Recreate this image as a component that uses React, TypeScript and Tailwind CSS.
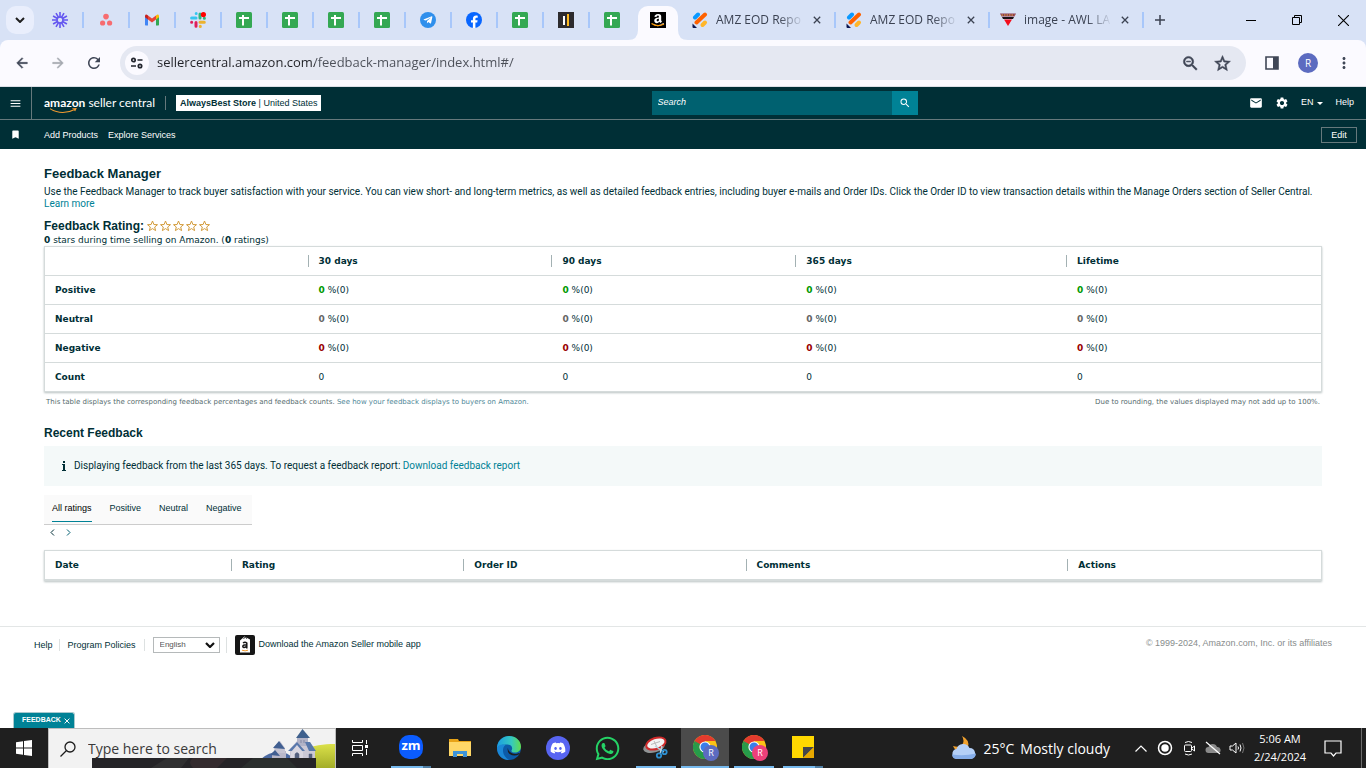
import type { ReactNode } from 'react';
import { clsx } from 'clsx';
import { FaAmazon, FaDiscord, FaTelegramPlane, FaWhatsapp } from 'react-icons/fa';
import {
  MdArrowBack,
  MdArrowForward,
  MdBookmark,
  MdEmail,
  MdMenu,
  MdMoreVert,
  MdRefresh,
  MdSearch,
  MdSettings,
  MdStarBorder,
  MdZoomOut,
} from 'react-icons/md';

// TYPES
type ChildrenProps = { children: ReactNode };

type TableColumn = { title: string; width: string };

// FAVICONS
const Loom = () => (
  <svg viewBox="0 0 16 16" className="size-4" stroke="#6457f0" strokeWidth="1.6">
    {[0, 30, 60, 90, 120, 150].map((angle) => (
      <path key={angle} d="M8 0v5.6M8 10.4V16" transform={`rotate(${angle} 8 8)`} />
    ))}
    <circle cx="8" cy="8" r="3" fill="none" strokeWidth="1.4" />
  </svg>
);

const Asana = () => (
  <svg viewBox="0 0 16 16" className="size-4" fill="#f76c70">
    <circle cx="8" cy="4.600" r="2.8" />
    <circle cx="4.6" cy="11" r="2.6" />
    <circle cx="11.6" cy="11" r="2.6" />
  </svg>
);

const Gmail = () => (
  <svg viewBox="0 0 16 16" className="size-4">
    <path d="M1 4v8.4c0 .6.4 1 1 1h2V6.500z" fill="#4285f4" />
    <path d="M15 4v8.400c0 .6-.4 1-1 1h-2V6.500z" fill="#34a853" />
    <path d="M12 3.500V7.500l3-2.300V4c0-1.500-1.500-2-2.400-1z" fill="#fbbc04" />
    <path d="M1 5.200l3 2.300v-4L3.400 3C2.500 2 1 2.500 1 4z" fill="#c5221f" />
    <path d="M4 3.500v4l4 3 4-3v-4l-4 3z" fill="#ea4335" />
  </svg>
);

const Slack = () => (
  <svg viewBox="0 0 16 16" className="size-4" strokeWidth="3" strokeLinecap="round">
    <path d="M6.200 1.500v.1M1.600 6H6" stroke="#36c5f0" />
    <path d="M10 2v4M14.300 6.200h.1" stroke="#2eb67d" />
    <path d="M10 10.300h4.300M10.300 14.300v.1" stroke="#ecb22e" />
    <path d="M6 10.500v3.800M1.600 10.300h.1" stroke="#e01e5a" />
    <circle cx="13.400" cy="2.600" r="2.600" fill="#ff0000" />
  </svg>
);

const Sheets = () => (
  <svg viewBox="0 0 16 16" className="size-4">
    <rect width="16" height="16" rx="1.500" fill="#34a853" />
    <path d="M3 6h10M7 3v10.500" stroke="#fff" strokeWidth="2" />
  </svg>
);

const Telegram = () => (
  <span className="flex size-4 items-center justify-center rounded-full bg-[#2f8fec] text-white">
    <FaTelegramPlane className="size-2.5" />
  </span>
);

const Facebook = () => (
  <svg viewBox="0 0 16 16" className="size-4">
    <circle cx="8" cy="8" r="8" fill="#0866ff" />
    <path d="M6.900 16v-5.400H5V8.200h1.900V7c0-2.300 1-3.500 3.300-3.500.5 0 1.200.1 1.500.2v2.100h-.9c-1 0-1.400.4-1.400 1.400v1h2.200l-.4 2.400H9.400V16z" fill="#fff" />
  </svg>
);

const BarsFavicon = () => (
  <svg viewBox="0 0 16 16" className="size-4">
    <rect width="16" height="16" fill="#2d2b2e" />
    <path d="M5 4h2v9H5z" fill="#fff" />
    <path d="M9 2h2v12H9z" fill="#fdb81e" />
  </svg>
);

const AmazonFavicon = () => (
  <span className="relative flex size-4 items-center justify-center bg-black text-white">
    <FaAmazon className="size-3.5" />
    <svg viewBox="0 0 16 16" className="absolute inset-0 size-4" fill="none" stroke="#ff9900" strokeWidth="1.300">
      <path d="M1.500 11.500q6 4 12.500.5" />
    </svg>
  </span>
);

const Jotform = () => (
  <svg viewBox="0 0 16 16" className="size-4" strokeWidth="4" strokeLinecap="round">
    <path d="M3 5.500L6 2.500" stroke="#0a99ff" />
    <path d="M4.500 10.500L13 2.500" stroke="#ff6100" />
    <path d="M10.500 13L13 10.500" stroke="#ffb629" />
    <path d="M.5 11.500L5 16H1.500Q.5 16 .5 15z" fill="#0a1551" />
  </svg>
);

const RedTriangle = () => (
  <svg viewBox="0 0 16 16" className="size-4">
    <path d="M0 1.500h16l-1.500 3h-13z" fill="#8c3a52" />
    <path d="M1.500 3h13" stroke="#e5b73b" strokeDasharray="1.500 1" />
    <path d="M2 5h12l-1 2H3z" fill="#1b1015" />
    <path d="M4 7.500h8L8 14z" fill="#f30d1c" />
  </svg>
);

// BROWSER
const PINNED_TABS = [
  { label: 'Loom', Icon: Loom },
  { label: 'Asana', Icon: Asana },
  { label: 'Gmail', Icon: Gmail },
  { label: 'Slack', Icon: Slack },
  { label: 'Sheet 1', Icon: Sheets },
  { label: 'Sheet 2', Icon: Sheets },
  { label: 'Sheet 3', Icon: Sheets },
  { label: 'Sheet 4', Icon: Sheets },
  { label: 'Telegram', Icon: Telegram },
  { label: 'Facebook', Icon: Facebook },
  { label: 'Sheet 5', Icon: Sheets },
  { label: 'Tracker', Icon: BarsFavicon },
  { label: 'Sheet 6', Icon: Sheets },
];

const OPEN_TABS = [
  { title: 'AMZ EOD Repo', Icon: Jotform },
  { title: 'AMZ EOD Repo', Icon: Jotform },
  { title: 'image - AWL LA', Icon: RedTriangle },
];

const CloseGlyph = ({ className }: { className?: string }) => (
  <svg viewBox="0 0 10 10" className={className} fill="none" stroke="currentColor" strokeWidth="1.600">
    <path d="M1 1l8 8M9 1L1 9" />
  </svg>
);

const TabStrip = () => (
  <div className="flex h-10 items-center bg-[#d8e2f6] pl-1.5 text-[#3b4252]">
    <button aria-label="Search tabs" className="mr-1 flex size-7 items-center justify-center rounded-[10px] bg-[#e9eefc]">
      <svg viewBox="0 0 10 6" className="h-1.5 w-2.5" fill="none" stroke="#1f1f1f" strokeWidth="2">
        <path d="M1 1l4 4 4-4" />
      </svg>
    </button>
    {PINNED_TABS.map(({ label, Icon }, index) => (
      <button
        key={label}
        aria-label={label}
        className={clsx(
          'flex h-4 w-[46px] shrink-0 items-center justify-center border-r-2',
          index === PINNED_TABS.length - 1 ? 'border-transparent' : 'border-[#a8c7fa]',
        )}
      >
        <Icon />
      </button>
    ))}
    <div className="relative mr-1 ml-[2px] flex h-[34px] w-10 shrink-0 self-end rounded-t-[10px] bg-[#fbfaff]">
      <svg viewBox="0 0 10 10" className="absolute bottom-0 -left-2.5 size-2.5" fill="#fbfaff">
        <path d="M10 0v10H0Q10 10 10 0z" />
      </svg>
      <svg viewBox="0 0 10 10" className="absolute -right-2.5 bottom-0 size-2.5" fill="#fbfaff">
        <path d="M0 0v10h10Q0 10 0 0z" />
      </svg>
      <button aria-label="Feedback Manager" className="flex w-full items-center justify-center pb-1.5">
        <AmazonFavicon />
      </button>
    </div>
    {OPEN_TABS.map(({ title, Icon }, index) => (
      <div key={index} className="flex h-4 w-[154px] items-center border-r-2 border-[#a8c7fa] pl-2.5">
        <Icon />
        <button className="ml-2 w-[90px] text-left text-xs leading-4 whitespace-nowrap [mask-image:linear-gradient(to_right,black_70%,transparent_98%)]">
          {title}
        </button>
        <button aria-label="Close tab" className="ml-[3px] flex size-4 items-center justify-center">
          <CloseGlyph className="size-2" />
        </button>
      </div>
    ))}
    <button aria-label="New tab" className="flex w-8 justify-center">
      <svg viewBox="0 0 10 10" className="size-2.5" stroke="currentColor" strokeWidth="1.500">
        <path d="M5 0v10M0 5h10" />
      </svg>
    </button>
    <div className="ml-auto flex text-black">
      <button aria-label="Minimize" className="flex h-7 w-[46px] items-center justify-center">
        <span className="h-px w-2.5 bg-black" />
      </button>
      <button aria-label="Restore" className="flex h-7 w-[46px] items-center justify-center">
        <svg viewBox="0 0 10 10" className="size-2.5" fill="none" stroke="currentColor">
          <path d="M.5 2.500h7v7h-7zM2.500 2.500v-2h7v7h-2" />
        </svg>
      </button>
      <button aria-label="Close" className="flex h-7 w-[46px] items-center justify-center">
        <svg viewBox="0 0 10 10" className="size-[11px]" fill="none" stroke="currentColor">
          <path d="M0 0l10 10M10 0L0 10" />
        </svg>
      </button>
    </div>
  </div>
);

// thickens the drawn shape; the first path is only the icon's bounding box
const BOLD_ICON = 'stroke-[0.7] [&>path:first-child]:stroke-none';

const Toolbar = () => (
  <div className="bg-[#d8e2f6]">
    <div className="flex h-[47px] items-center rounded-t-lg border-b border-[#dcdfe6] bg-[#fbfaff] text-[#3f4656]">
      <button aria-label="Back" className="ml-3.5">
        <MdArrowBack className={clsx('size-4', BOLD_ICON)} />
      </button>
      <button aria-label="Forward" className="ml-5 text-[#a5a8b0]">
        <MdArrowForward className={clsx('size-4', BOLD_ICON)} />
      </button>
      <button aria-label="Reload" className="ml-[19px]">
        <MdRefresh className="size-[18px]" />
      </button>
      <div className="ml-[17px] flex h-[34px] flex-1 items-center rounded-full bg-[#e5e8f2] pr-[14px] pl-[5px]">
        <button aria-label="Site information" className="flex size-6 items-center justify-center rounded-full bg-[#fbfaff]">
          <svg viewBox="0 0 14 12" className="h-3 w-3.5" fill="none" stroke="#23262e" strokeWidth="1.700">
            <circle cx="3.500" cy="3" r="1.700" />
            <path d="M7.500 3h5M1 9h5" />
            <circle cx="10" cy="9" r="1.700" />
          </svg>
        </button>
        <input
          aria-label="Address"
          readOnly
          value="sellercentral.amazon.com/feedback-manager/index.html#/"
          className="mx-2 flex-1 bg-[linear-gradient(to_right,#202126_158px,#4b4f58_158px)] bg-clip-text text-[13px] text-transparent outline-none"
        />
        <button aria-label="Zoom">
          <MdZoomOut className={clsx('size-[19px]', BOLD_ICON)} />
        </button>
        <button aria-label="Bookmark this page" className="ml-[13px]">
          <MdStarBorder className={clsx('size-[19px]', BOLD_ICON)} />
        </button>
      </div>
      <button aria-label="Side panel" className="ml-[19px]">
        <svg viewBox="0 0 14 14" className="size-3.5">
          <path d="M1 1h12v12H1z" fill="none" stroke="currentColor" strokeWidth="1.600" />
          <path d="M8 1h5v12H8z" fill="currentColor" />
        </svg>
      </button>
      <button className="ml-[19px] flex size-5 items-center justify-center rounded-full bg-[#5c6bc0] text-[10px] text-white">
        R
      </button>
      <button aria-label="Menu" className="mr-[13px] ml-[17px]">
        <MdMoreVert className="size-[18px]" />
      </button>
    </div>
  </div>
);

// SELLER CENTRAL
const SellerHeader = () => (
  <header className="bg-[#002f36] text-[10px] text-white">
    <div className="flex h-[33px] items-center border-b border-[#66797c]">
      <div className="flex w-[47.7%] items-center self-stretch">
        <button aria-label="Open menu" className="flex w-8 items-center justify-center self-stretch border-r border-[#66797c]">
          <MdMenu className="size-[13px]" />
        </button>
        <a href="#" className="relative ml-3 font-['Lato',sans-serif] text-xs leading-4 whitespace-nowrap">
          <span className="font-bold">amazon</span> seller central
          <svg viewBox="0 0 30 6" className="absolute top-[13px] left-1.5 h-1.5 w-7" fill="none" stroke="#f29b30" strokeWidth="1.200">
            <path d="M0 .5q13 8 27 .5M24 0h4l-1.500 3" />
          </svg>
        </a>
        <span className="mx-2.5 h-3.5 w-px bg-[#66797c]" />
        <button className="h-4 bg-white px-1 text-[9px] leading-4 whitespace-nowrap text-[#002f36]">
          <b>AlwaysBest Store</b> | United States
        </button>
      </div>
      <form className="flex h-6 w-[19.5%]">
        <input
          aria-label="Search"
          placeholder="Search"
          className="min-w-0 flex-1 bg-[#006170] px-1.5 text-[9px] italic outline-none placeholder:text-white"
        />
        <button type="button" aria-label="Submit search" className="flex w-[26px] items-center justify-center bg-[#008296]">
          <MdSearch className="size-3" />
        </button>
      </form>
      <div className="ml-auto flex items-center pr-3 text-[9px]">
        <button aria-label="Messages">
          <MdEmail className="size-3.5" />
        </button>
        <button aria-label="Settings" className="ml-3">
          <MdSettings className="size-3.5" />
        </button>
        <button className="ml-3 flex items-center gap-1">
          EN
          <svg viewBox="0 0 6 3" className="h-[3px] w-1.5" fill="currentColor">
            <path d="M0 0h6L3 3z" />
          </svg>
        </button>
        <a href="#" className="ml-3">
          Help
        </a>
      </div>
    </div>
    <div className="flex h-[29px] items-center pr-[9px] pl-2.5 text-[9px]">
      <MdBookmark className="mr-[23px] size-[11px]" />
      <a href="#" className="mr-2.5 pt-0.5">
        Add Products
      </a>
      <a href="#" className="pt-0.5">
        Explore Services
      </a>
      <button className="ml-auto h-4 w-9 border border-[#66797c] leading-3">Edit</button>
    </div>
  </header>
);

const HeaderCell = ({ children, width, first }: ChildrenProps & { width: string; first: boolean }) => (
  <th className="h-[29px] p-0 text-left align-middle" style={{ width }}>
    <span className={clsx('block h-3 pl-2.5 leading-3', !first && 'border-l border-[#a3b1b3]')}>{children}</span>
  </th>
);

const TABLE_CLASS =
  'w-full table-fixed border-collapse border border-[#d5dbdb] shadow-[0_1px_2px_#b9c2c2]';

const RATING_COLUMNS: TableColumn[] = [
  { title: '', width: '20.6%' },
  { title: '30 days', width: '19.1%' },
  { title: '90 days', width: '19.1%' },
  { title: '365 days', width: '21.2%' },
  { title: 'Lifetime', width: '20%' },
];

const RATING_ROWS = [
  { label: 'Positive', color: 'text-[#009900]' },
  { label: 'Neutral', color: 'text-[#666666]' },
  { label: 'Negative', color: 'text-[#990000]' },
];

const RatingTable = () => (
  <table className={TABLE_CLASS}>
    <thead>
      <tr>
        {RATING_COLUMNS.map(({ title, width }, index) => (
          <HeaderCell key={title} width={width} first={index === 0}>
            {title}
          </HeaderCell>
        ))}
      </tr>
    </thead>
    <tbody>
      {RATING_ROWS.map(({ label, color }) => (
        <tr key={label} className="h-[29px] border-t border-[#d5dbdb]">
          <th className="pl-2.5 text-left">{label}</th>
          {RATING_COLUMNS.slice(1).map(({ title }) => (
            <td key={title} className="pl-[11px]">
              <b className={color}>0</b> %(0)
            </td>
          ))}
        </tr>
      ))}
      <tr className="h-[29px] border-t border-[#d5dbdb]">
        <th className="pl-2.5 text-left">Count</th>
        {RATING_COLUMNS.slice(1).map(({ title }) => (
          <td key={title} className="pl-[11px]">
            0
          </td>
        ))}
      </tr>
    </tbody>
  </table>
);

const FEEDBACK_COLUMNS: TableColumn[] = [
  { title: 'Date', width: '14.6%' },
  { title: 'Rating', width: '18.2%' },
  { title: 'Order ID', width: '22.1%' },
  { title: 'Comments', width: '25.2%' },
  { title: 'Actions', width: '19.9%' },
];

const FeedbackTable = () => (
  <table className={clsx(TABLE_CLASS, 'mt-3.5 border-b-2')}>
    <thead>
      <tr>
        {FEEDBACK_COLUMNS.map(({ title, width }, index) => (
          <HeaderCell key={title} width={width} first={index === 0}>
            {title}
          </HeaderCell>
        ))}
      </tr>
    </thead>
  </table>
);

const Star = () => (
  <svg viewBox="0 0 13 12" className="h-3 w-[13px]" fill="none" stroke="#d39c3c" strokeWidth="1">
    <path d="M6.500 1l1.400 3.500 3.600.2-2.800 2.300.9 3.600-3.100-2-3.100 2 .9-3.600L1.500 4.700l3.600-.2z" />
  </svg>
);

const Heading = ({ children }: ChildrenProps) => (
  <h2 className="font-['Liberation_Sans',Arial,sans-serif] text-xs leading-4 font-bold">{children}</h2>
);

const FILTERS = ['All ratings', 'Positive', 'Neutral', 'Negative'];

const FeedbackManager = () => (
  <main className="px-11 pt-[17px] font-['DejaVu_Sans',Verdana,sans-serif] text-[9px] leading-3 text-[#002f36]">
    <h1 className="font-['Liberation_Sans',Arial,sans-serif] text-[13px] leading-4 font-bold">Feedback Manager</h1>
    <p className="mt-1 font-['Roboto',sans-serif] text-[10px] leading-3">
      Use the Feedback Manager to track buyer satisfaction with your service. You can view short- and long-term metrics,
      as well as detailed feedback entries, including buyer e-mails and Order IDs. Click the Order ID to view transaction
      details within the Manage Orders section of Seller Central.{' '}
      <a href="#" className="block text-[#008296]">
        Learn more
      </a>
    </p>
    <div className="mt-2 flex items-center">
      <Heading>Feedback Rating:</Heading>
      <span className="ml-0.5 flex" role="img" aria-label="0 out of 5 stars">
        {[1, 2, 3, 4, 5].map((star) => (
          <Star key={star} />
        ))}
      </span>
    </div>
    <p>
      <b>0</b> stars during time selling on Amazon. (<b>0</b> ratings)
    </p>
    <RatingTable />
    <div className="mt-1 flex justify-between px-0.5 text-[7px] text-[#566b6e]">
      <p>
        This table displays the corresponding feedback percentages and feedback counts.{' '}
        <a href="#" className="text-[#4f8797]">
          See how your feedback displays to buyers on Amazon.
        </a>
      </p>
      <p>Due to rounding, the values displayed may not add up to 100%.</p>
    </div>
    <div className="mt-[17px]">
      <Heading>Recent Feedback</Heading>
    </div>
    <div className="mt-[5px] flex h-10 items-center bg-[#f4f9f9] pl-[18px]">
      <svg viewBox="0 0 4 10" className="h-2.5 w-1" fill="#002f36">
        <path d="M1 0h2v2H1zM0 3h3v6h1v1H0V9h1V4H0z" />
      </svg>
      <p className="ml-2 font-['Roboto',sans-serif] text-[10px] leading-3">
        Displaying feedback from the last 365 days. To request a feedback report:{' '}
        <a href="#" className="text-[#008296]">
          Download feedback report
        </a>
      </p>
    </div>
    <div className="mt-[9px] flex h-[30px] w-52 gap-[18px] border-b border-[#cccccc] bg-[#fafafa] pl-2 font-['Liberation_Sans',Arial,sans-serif] text-[9px]">
      {FILTERS.map((filter, index) => (
        <button
          key={filter}
          className={clsx(
            'mb-0.5 border-b whitespace-nowrap',
            index === 0 ? 'border-b-[#008296] text-black' : 'border-transparent',
          )}
        >
          {filter}
        </button>
      ))}
    </div>
    <div className="flex gap-[11px] px-1.5 pt-1">
      <button aria-label="Previous page">
        <svg viewBox="0 0 5 7" className="h-[7px] w-[5px]" fill="none" stroke="#002f36">
          <path d="M4 .5l-3 3 3 3" />
        </svg>
      </button>
      <button aria-label="Next page">
        <svg viewBox="0 0 5 7" className="h-[7px] w-[5px]" fill="none" stroke="#005f70">
          <path d="M1 .5l3 3-3 3" />
        </svg>
      </button>
    </div>
    <FeedbackTable />
  </main>
);

const SellerFooter = () => (
  <footer className="mt-[45px] flex items-start justify-between border-t border-[#e3e6e6] px-[34px] pt-2 text-[9px] text-[#002f36]">
    <div className="flex items-center">
      <a href="#" className="border-r border-[#dde1e1] pr-1.5 leading-3">
        Help
      </a>
      <a href="#" className="border-r border-[#dde1e1] px-2 leading-3">
        Program Policies
      </a>
      <div className="relative ml-2 flex border-r border-[#dde1e1] pr-1.5">
        <select
          aria-label="Language"
          className="h-4 w-[67px] appearance-none border border-[#b5b9ba] bg-white py-0 pl-1.5 text-[8px] leading-[14px] text-[#555555]"
        >
          <option>English</option>
        </select>
        <svg viewBox="0 0 10 6" className="pointer-events-none absolute top-[5px] right-[11px] h-1.5 w-2.5" fill="none" stroke="#111111" strokeWidth="2.200">
          <path d="M1 1l4 4 4-4" />
        </svg>
      </div>
      <a href="#" className="ml-2 flex items-center gap-1">
        <svg viewBox="0 0 20 20" className="size-5">
          <rect width="20" height="20" rx="2" fill="#161616" />
          <path d="M5 5.500L9.500 1.500l5.500 3v13H5z" fill="#fff" />
          <path d="M8.500 3.500q2-2.500 3.500 0" stroke="#161616" fill="none" />
          <path d="M8 8q2-1.600 3.800 0v5.500M11.800 9.800q-3.800-.2-4 1.700.2 2.200 4-.2" stroke="#161616" strokeWidth="1.500" fill="none" />
          <path d="M7 15.200q3.200 1.300 6 0" stroke="#f29b30" fill="none" />
        </svg>
        Download the Amazon Seller mobile app
      </a>
    </div>
    <p className="pt-0.5 text-[#888c8c]">© 1999-2024, Amazon.com, Inc. or its affiliates</p>
  </footer>
);

// TASKBAR
const Chrome = ({ badge }: { badge: string }) => (
  <span className="relative block size-6">
    <svg viewBox="0 0 24 24" className="size-6">
      <circle cx="12" cy="12" r="12" fill="#fbc116" />
      <path d="M12 12L1.600 6A12 12 0 0 1 22.400 6H12z" fill="#e33b2e" />
      <path d="M1.600 6A12 12 0 0 0 12 24l5.200-9-5.200-3z" fill="#269c4a" />
      <path d="M1.600 6L7 15l5-9z" fill="#e33b2e" />
      <path d="M1.600 6l5.200 9L12 12z" fill="#269c4a" />
      <circle cx="12" cy="12" r="5.600" fill="#fff" />
      <circle cx="12" cy="12" r="4.500" fill="#3a7de9" />
    </svg>
    <span
      className={clsx(
        'absolute top-[10px] left-[10px] flex size-4 items-center justify-center rounded-full text-[9px] text-white',
        badge,
      )}
    >
      R
    </span>
  </span>
);

const ZoomIcon = () => (
  <span className="flex size-6 items-center justify-center rounded-[10px] bg-[#0b5cff] pb-0.5 text-[13px] font-bold text-white">
    zm
  </span>
);

const Folder = () => (
  <svg viewBox="0 0 24 24" className="size-6">
    <path d="M1 3h9l1 2h12v15H1z" fill="#e8a317" />
    <path d="M1 6h22v14H1z" fill="#ffd767" />
    <path d="M5 21v-6h14v6h-4v-3H9v3z" fill="#3f94d8" />
  </svg>
);

const Edge = () => (
  <svg viewBox="0 0 24 24" className="size-6">
    <defs>
      <linearGradient id="edge-top" x1="0" x2="1">
        <stop offset="0" stopColor="#1b9de2" />
        <stop offset=".6" stopColor="#35c9c0" />
        <stop offset="1" stopColor="#62dc4e" />
      </linearGradient>
    </defs>
    <circle cx="12" cy="12" r="12" fill="#0c5ba8" />
    <path d="M0 11C1 4 6 0 12 0c7 0 12 5 12 10.500 0 4-3 6-6 6-2.500 0-4-1-3.500-2 1.500-2 .5-6-4-6C6 8.500 1.500 9 0 13z" fill="url(#edge-top)" />
    <path d="M0 12c1-3 5-4.500 8.500-3-4 2.500-3.500 11 3.500 14.900C5 24 0 19 0 12z" fill="#1b87d6" />
    <path d="M11 11.500c-.5 5 6 8 11 5.500q1.300-.5.200 1.200C17 21 9 19 11 11.500z" fill="#1e1e1e" />
  </svg>
);

const Discord = () => (
  <span className="flex size-6 items-center justify-center rounded-full bg-[#5865f2] text-white">
    <FaDiscord className="size-4" />
  </span>
);

const Snip = () => (
  <svg viewBox="0 0 26 24" className="h-6 w-[26px]">
    <ellipse cx="11" cy="12" rx="11" ry="5.500" fill="#8f9394" transform="rotate(-14 11 12)" />
    <ellipse cx="13" cy="8.500" rx="10" ry="5.500" fill="#f4f4f4" stroke="#cf2a2a" strokeWidth="2" transform="rotate(-18 13 9)" />
    <path d="M8 9.500l9-3M11 6l3 6" stroke="#b9b9b9" />
    <path d="M12 11l9 6M19 11l-2 8" stroke="#bcd3e0" strokeWidth="1.500" />
    <circle cx="16" cy="20.500" r="2.200" fill="none" stroke="#2d8fd0" strokeWidth="1.800" />
    <circle cx="21.500" cy="17" r="2.200" fill="none" stroke="#2d8fd0" strokeWidth="1.800" />
  </svg>
);

const StickyNote = () => (
  <svg viewBox="0 0 22 22" className="size-[22px]">
    <path d="M0 0h22v22H0z" fill="#ffd800" />
    <path d="M11 22V11h11z" fill="#45474a" />
    <path d="M11 22L22 11v11z" fill="#e8a800" />
  </svg>
);

const TASKBAR_APPS = [
  { label: 'Zoom', icon: <ZoomIcon />, bar: 'mx-1', split: true },
  { label: 'File Explorer', icon: <Folder /> },
  { label: 'Edge', icon: <Edge /> },
  { label: 'Discord', icon: <Discord /> },
  { label: 'WhatsApp', icon: <FaWhatsapp className="size-[27px] text-[#25d366]" /> },
  { label: 'Snipping Tool', icon: <Snip />, bar: 'mx-1' },
  { label: 'Chrome', icon: <Chrome badge="bg-[#5c6bc0]" />, bar: 'mx-0', active: true },
  { label: 'Chrome, second profile', icon: <Chrome badge="bg-[#ec407a]" />, bar: 'mx-1' },
  { label: 'Sticky Notes', icon: <StickyNote />, bar: 'mx-1', split: true },
];

const Landscape = () => (
  <svg viewBox="0 0 244 40" className="pointer-events-none absolute right-0 bottom-0 h-10 w-[244px]">
    <defs>
      <linearGradient id="hill" x1="0" y1="0" x2="0" y2="1">
        <stop offset="0" stopColor="#dbe14a" />
        <stop offset="1" stopColor="#a3ad28" />
      </linearGradient>
    </defs>
    <path d="M196 40c4-16 22-24 48-24v24z" fill="url(#hill)" />
    <path d="M170 31q8-7 17-7 11 0 15 7z" fill="#4d6ba3" />
    <path d="M181 25l5-3 9 1v8h-14z" fill="#b9b8c9" />
    <path d="M183 19l6-6 5 7v5h-10z" fill="#c5c4d2" />
    <path d="M182 20l6-7 6 8zM179 27l5-5 5 6z" fill="#415f91" />
    <path d="M199 21l7-8 13 1 5 8v9h-25z" fill="#cbc8d5" />
    <path d="M206 9h11v9h-11z" fill="#b2b3c7" />
    <path d="M205 10l6.500-9L219 10z" fill="#3e608d" />
    <path d="M197 23l9-9 8 9M214 14l5 0 6 9h-7z" fill="#5878ab" />
    <path d="M200 24l6-7 6 7v7h-12z" fill="#d9d6e0" />
    <path d="M204 31v-5q2-3 4 0v5zM218 30v-4h3v4zM210 15v-3M213 15v-3" fill="#55607f" stroke="#55607f" strokeWidth=".5" />
    <path d="M1 30h224v10H1z" fill="#252427" />
    <path d="M60 40l16-10h22l-8 10z" fill="#303031" />
    <path d="M102 40q-6-6 0-10h34l-10 10z" fill="#342b2e" />
    <path d="M150 40l12-10h34l10 10z" fill="#2b2f2e" />
  </svg>
);

const Tray = () => (
  <div className="ml-auto flex items-center text-white">
    <button className="flex items-center gap-1.5 text-[14px]">
      <svg viewBox="0 0 26 24" className="h-6 w-[26px]">
        <path d="M11 0q3 5 0 9-3 3-9 1 2 5 7 6l8-5q2-7-6-11z" fill="#f0a12e" />
        <path d="M6 23a5 5 0 0 1-.5-9.900A7 7 0 0 1 18.500 12a5.600 5.600 0 0 1 1.500 11z" fill="#b4d0f8" />
        <path d="M6 23a5 5 0 0 1-5-4.500q12 2 24-1A5.500 5.500 0 0 1 20 23z" fill="#86aeea" />
      </svg>
      <span>25°C</span>
      <span>Mostly cloudy</span>
    </button>
    <div className="ml-[23px] flex items-center gap-2">
      <button aria-label="Show hidden icons" className="flex size-4 items-center justify-center">
        <svg viewBox="0 0 12 7" className="h-[7px] w-3" fill="none" stroke="currentColor" strokeWidth="1.200">
          <path d="M.5 6.500L6 1l5.500 5.500" />
        </svg>
      </button>
      <svg viewBox="0 0 16 16" className="size-4" fill="none" stroke="currentColor" strokeWidth="1.500">
        <circle cx="8" cy="8" r="6.500" />
        <circle cx="8" cy="8" r="3" fill="currentColor" />
      </svg>
      <svg viewBox="0 0 16 16" className="size-4" fill="none" stroke="currentColor">
        <rect x="3.500" y="5" width="7" height="6.500" rx="1" />
        <path d="M11 8l2.500-2v5L11 9M4 2.500q3.500-2 7 0M4 14q3.500 2 7 0" />
      </svg>
      <svg viewBox="0 0 16 16" className="size-4">
        <path d="M3.500 13a3 3 0 0 1 0-6 4.500 4.500 0 0 1 8.500 0 3 3 0 0 1 1 6z" fill="#8b8b8b" />
        <path d="M1 2l14 12" stroke="#fff" strokeWidth="1.200" />
      </svg>
      <svg viewBox="0 0 17 16" className="h-4 w-[17px]" fill="none" stroke="currentColor">
        <path d="M1 6h2.500L7 3v10L3.500 10H1zM9 6.500q1 1.500 0 3M11 4.500q2 3.500 0 7" />
        <path d="M13.500 3q3 5 0 10" stroke="#777777" />
      </svg>
    </div>
    <div className="ml-1.5 w-14 text-center text-[11px] leading-[18px] whitespace-nowrap">
      <p>5:06 AM</p>
      <p>2/24/2024</p>
    </div>
    <button aria-label="Notifications" className="ml-4">
      <svg viewBox="0 0 18 17" className="h-[17px] w-[18px]" fill="none" stroke="currentColor" strokeWidth="1.200">
        <path d="M1 1h16v12h-5l-2.500 3L7 13H1z" />
      </svg>
    </button>
    <span className="mr-1 ml-[19px] h-10 w-px bg-[#6b6b6b]" />
  </div>
);

const Taskbar = () => (
  <div className="flex h-10 bg-[#1f1f1f]">
    <button aria-label="Start" className="flex w-12 items-center justify-center">
      <svg viewBox="0 0 16 16" className="size-4" fill="#fff">
        <path d="M0 2.200l7-1v6.300H0zM8 1l8-1v7.500H8zM0 8.500h7v6.300l-7-1zM8 8.500h8V16l-8-1z" />
      </svg>
    </button>
    <div className="relative flex w-72 items-center gap-3 border border-b-0 border-[#bdbdbd] bg-[#f2f2f2] pl-[11px]">
      <svg viewBox="0 0 16 16" className="size-4" fill="none" stroke="#1c1c1c" strokeWidth="1.300">
        <circle cx="10" cy="6" r="5" />
        <path d="M6.500 9.500L.5 15.500" />
      </svg>
      <input aria-label="Search Windows" placeholder="Type here to search" className="w-44 bg-transparent text-[14px] outline-none placeholder:text-[#3a3a3a]" />
      <Landscape />
    </div>
    <button aria-label="Task view" className="mr-[3px] flex w-12 items-center justify-center">
      <svg viewBox="0 0 16 16" className="size-4" fill="none" stroke="#fff">
        <path d="M.5 0v2.500h10V0M.5 16v-2.500h10V16M.5 5.500h10v5H.5zM14.500 0v4M14.500 9v6" />
        <path d="M13 5h3v3h-3z" fill="#fff" stroke="none" />
      </svg>
    </button>
    <div className="flex gap-px">
      {TASKBAR_APPS.map(({ label, icon, bar, active, split }) => (
        <button key={label} aria-label={label} className={clsx('flex w-12 flex-col', active && 'bg-[#4b4b4b]')}>
          <span className="flex w-full flex-1 items-center justify-center">{icon}</span>
          {bar && (
            <span className="flex self-stretch">
              <span className={clsx('h-0.5 flex-1 bg-[#76b9ed]', bar, split && 'mr-0')} />
              {split && <span className="mr-1 h-0.5 w-2 bg-[#4f7ea3]" />}
            </span>
          )}
        </button>
      ))}
    </div>
    <Tray />
  </div>
);

export default function App() {
  return (
    <div className="flex min-h-screen flex-col bg-white font-['Open_Sans','Segoe_UI',sans-serif]">
      <TabStrip />
      <Toolbar />
      <div className="flex flex-1 flex-col font-['Liberation_Sans',Arial,sans-serif]">
        <SellerHeader />
        <FeedbackManager />
        <SellerFooter />
        <button className="mt-auto ml-[13px] flex h-4 items-center gap-[3px] self-start rounded-t-[3px] border border-b-0 border-[#a9c9ce] bg-[#008296] pr-1 pl-2 text-[7px] font-bold text-white">
          FEEDBACK
          <CloseGlyph className="size-1.5" />
        </button>
      </div>
      <Taskbar />
    </div>
  );
}
